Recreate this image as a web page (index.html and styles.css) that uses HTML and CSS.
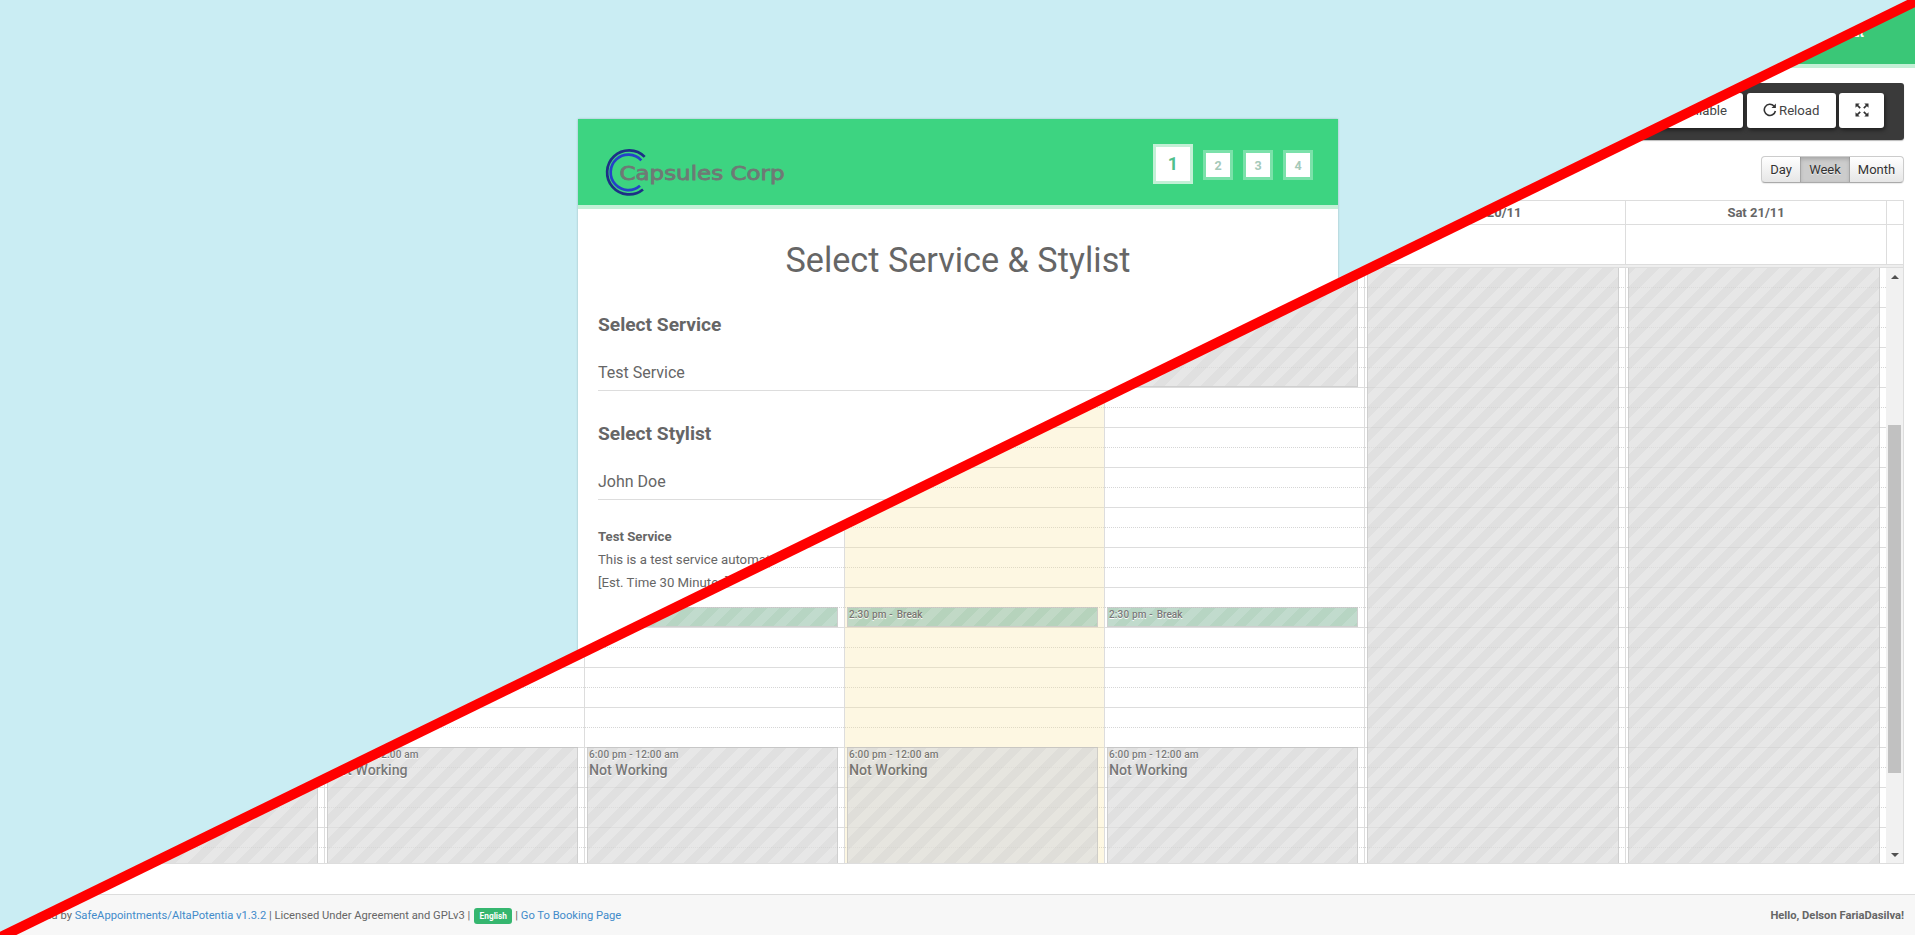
FILE: index.html
```html
<!DOCTYPE html>
<html lang="en">
<head>
<meta charset="utf-8">
<title>Capsules Corp</title>
<link rel="stylesheet" href="styles.css">
</head>
<body>
<div class="stage">
  <div class="backend">
    <header class="topbar"><span class="logout">Log Out</span></header>
    <div class="toolbar">
      <button class="tool">Unavailable</button>
      <button class="tool reload"><svg width="14" height="14" viewBox="0 0 14 14"><path d="M11 3A5.600 5.600 0 1 0 12.400 8" fill="none" stroke="#333" stroke-width="1.600"/><path d="M12.900 0.600V5H8.500z" fill="#333"/></svg>Reload</button>
      <button class="tool full"><svg width="14" height="14" viewBox="0 0 14 14" fill="#333" stroke="#333" stroke-width="1.700"><path stroke="none" d="M.5 .5h4.200L.5 4.700zM13.500 .5v4.200L9.300 .5zM.5 13.500V9.300L4.700 13.500zM13.500 13.500H9.300L13.500 9.300z"/><path d="M2 2l3.200 3.200M12 2l-3.200 3.200M2 12l3.200-3.200M12 12l-3.200-3.200"/></svg></button>
    </div>
    <div class="views"><span>Day</span><span class="on">Week</span><span>Month</span></div>
    <div class="calendar">
      <div class="cols head"><b></b><b>Sun 15/11</b><b>Mon 16/11</b><b>Tue 17/11</b><b>Wed 18/11</b><b>Thu 19/11</b><b>Fri 20/11</b><b>Sat 21/11</b><b></b></div>
      <div class="cols allday"><i></i><i></i><i></i><i></i><i></i><i></i><i></i><i></i><i></i></div>
      <div class="divider"></div>
      <div class="body">
        <div class="cols grid">
          <div class="day axis"></div>
          <div class="day"><div class="event off whole"></div></div>
          <div class="day"><div class="event off am"></div><div class="event break"><small>2:30 pm -</small><em>Break</em></div><div class="event off pm"><small>6:00 pm - 12:00 am</small><strong>Not Working</strong></div></div>
          <div class="day"><div class="event off am"></div><div class="event break"></div><div class="event off pm"><small>6:00 pm - 12:00 am</small><strong>Not Working</strong></div></div>
          <div class="day today"><div class="event off am"></div><div class="event break"><small>2:30 pm -</small><em>Break</em></div><div class="event off pm"><small>6:00 pm - 12:00 am</small><strong>Not Working</strong></div></div>
          <div class="day"><div class="event off am"></div><div class="event break"><small>2:30 pm -</small><em>Break</em></div><div class="event off pm"><small>6:00 pm - 12:00 am</small><strong>Not Working</strong></div></div>
          <div class="day"><div class="event off whole"></div></div>
          <div class="day"><div class="event off whole"></div></div>
        </div>
        <div class="scroll"><span class="arrow up"></span><span class="thumb"></span><span class="arrow down"></span></div>
      </div>
    </div>
    <footer class="footer">
      <div class="credits"><span>Powered by <a>SafeAppointments/AltaPotentia v1.3.2</a> | Licensed Under Agreement and GPLv3 |</span><span class="lang">English</span><span>| <a>Go To Booking Page</a></span></div>
      <strong class="hello">Hello, Delson FariaDasilva!</strong>
    </footer>
  </div>

  <div class="booking">
    <main class="card">
      <header class="card-head">
        <svg class="logo" width="184" height="50" viewBox="0 0 184 50">
          <g fill="none" stroke-width="2.700">
            <path d="M39.700 8.900A22 22 0 1 0 38 41.500" stroke="#1d2f86"/>
            <path d="M36.300 12.300A17.700 17.700 0 1 0 35 37.700" stroke="#2542c8"/>
          </g>
          <text x="14.500" y="31.500" textLength="165" lengthAdjust="spacingAndGlyphs">Capsules Corp</text>
        </svg>
        <div class="steps"><span class="active">1</span><span>2</span><span>3</span><span>4</span></div>
      </header>
      <h1>Select Service &amp; Stylist</h1>
      <section class="form">
        <h2>Select Service</h2>
        <div class="select">Test Service</div>
        <h2>Select Stylist</h2>
        <div class="select">John Doe</div>
        <div class="desc"><strong>Test Service</strong><br>This is a test service automatically<br>[Est. Time 30 Minutes]</div>
      </section>
    </main>
  </div>

  <svg class="slash" width="1915" height="935" viewBox="0 0 1915 935"><path d="M-20 947.200L1935 -8" stroke="#f00" stroke-width="10"/></svg>
</div>
</body>
</html>
```

FILE: styles.css
```css
* { box-sizing: border-box; }
body { margin: 0; font-family: Roboto, "Liberation Sans", sans-serif; color: #666; overflow: hidden; }
.stage { position: relative; width: 1915px; height: 935px; overflow: hidden; background: #fff; }
.backend { height: 935px; display: flex; flex-direction: column; }

.topbar { height: 68px; background: #3ac777; border-bottom: 4px solid #c3f0d6; display: flex; justify-content: flex-end; padding: 23px 51px 0 0; flex: none; }
.logout { color: #fff; font-size: 13px; line-height: 20px; font-weight: 700; }
.toolbar { margin: 15px 11px 0; height: 57px; background: #3a3a3a; border-radius: 3px; padding: 10px 20px 0 0; display: flex; justify-content: flex-end; flex: none; box-shadow: 0 1px 1px #bbb; }
.tool { height: 35px; border: 0; border-radius: 3px; background: #fff; color: #444; font: 13.200px/20px Roboto, sans-serif; padding: 0 16px; display: flex; align-items: center; box-shadow: 1px 2px 4px rgba(0,0,0,.5); }
.reload { width: 89px; margin-left: 4px; gap: 2px; padding: 0 0 0 16px; }
.reload svg { margin-top: -2px; }
.full { width: 45px; margin-left: 3px; padding: 0; justify-content: center; }
.full svg { margin-top: -2px; }
.views { margin: 16px 11px 0 auto; width: 143px; height: 27px; display: grid; grid-template-columns: 38px 50px 53px; border: 1px solid #ccc; border-bottom-color: #aaa; border-radius: 4px; background: linear-gradient(#fff, #e6e6e6); font-size: 13px; line-height: 25px; color: #333; text-align: center; text-shadow: 0 1px 1px rgba(255,255,255,.75); flex: none; box-shadow: 0 1px 1px rgba(0,0,0,.08); }
.views span { white-space: nowrap; }
.views .on { background: #ccc; box-shadow: inset 0 2px 4px rgba(0,0,0,.2), inset 1px 0 #b5b5b5, inset -1px 0 #b5b5b5; }

.calendar { margin: 17px 11px 0 10px; border: 1px solid #ddd; height: 664px; flex: none; }
.cols { display: grid; grid-template-columns: 53px repeat(5, 260px) 261px 261px 17px; }
.head { height: 24px; border-bottom: 1px solid #ddd; font-size: 13px; line-height: 24px; text-align: center; }
.cols b + b, .allday i + i { border-left: 1px solid #ddd; }
.allday { height: 39px; }
.divider { height: 4px; background: #eee; border: 1px solid #ddd; border-width: 1px 0; }
.body { height: 595px; display: flex; overflow: hidden; }
.grid { flex: none; width: 1875px; grid-template-columns: 53px repeat(5, 260px) 261px 261px; height: 595px;
  background:
    repeating-linear-gradient(#0000 0 39px, #ddd 39px 40px),
    repeating-linear-gradient(90deg, #0000 0 1px, #fff 1px 2px),
    repeating-linear-gradient(#0000 0 19px, #d6d6d6 19px 20px, #0000 20px 40px); }
.day { border-left: 1px solid #ddd; padding: 0 6px 0 2px; height: 595px; overflow: hidden; display: flex; flex-direction: column; }
.day.axis { border-left: 0; }
.today { background: rgba(250,228,160,.3); }
.event { flex: none; opacity: .75; border: 1px solid #c0c0c0; overflow: hidden; padding: 0 1px; color: #4c4c4c; text-shadow: 0 1px 0 #fff; background: repeating-linear-gradient(135deg, #d6d6d6 0 4.740px, #dfdfdf 4.740px 13.220px, #d6d6d6 13.220px 16.970px); }
.event small { font-size: 10px; line-height: 14px; letter-spacing: .15px; font-weight: 500; display: block; white-space: nowrap; }
.event strong { font-size: 14.200px; line-height: 16px; display: block; font-weight: 500; }
.whole { height: 596px; border-top: 0; }
.am { height: 119px; border-top: 0; }
.break { height: 20px; margin-top: 220px; display: flex; background: repeating-linear-gradient(135deg, #9fc7b0 0 8.480px, #adcfbd 8.480px 16.970px); font-size: 10px; gap: 4px; }
.break em { font-style: normal; line-height: 13px; font-weight: 500; }
.pm { height: 130px; margin-top: 120px; }
.scroll { width: 17px; background: #f1f1f1; display: flex; flex-direction: column; align-items: center; padding: 7px 0 6px; }
.arrow { border: 4px solid transparent; }
.up { border-top: 0; border-bottom-color: #505050; }
.down { border-bottom: 0; border-top-color: #505050; margin-top: auto; }
.thumb { width: 13px; height: 348px; margin-top: 146px; background: #c1c1c1; }

.footer { margin-top: auto; height: 41px; border-top: 1px solid #ddd; background: #f7f7f7; display: flex; justify-content: space-between; padding: 0 11px 0 14px; font-size: 11.200px; line-height: 41px; }
.footer a { color: #428bca; }
.credits { display: flex; align-items: center; white-space: pre; }
.lang { background: #35b66f; color: #fff; font-size: 8.300px; font-weight: 700; line-height: 16px; height: 16px; width: 38px; text-align: center; border-radius: 3px; margin: 1px 3px 0 4px; }

.booking { position: absolute; inset: 0; background: #caedf3; clip-path: polygon(0 0, 1915px 0, 1915px 2px, 0 937px); }
.card { width: 760px; height: 720px; margin: 119px 0 0 578px; background: #fff; box-shadow: 0 0 2px rgba(0,0,0,.22); }
.card-head { height: 90px; background: #3dd481; border-bottom: 4px solid #c3f0d6; display: flex; justify-content: space-between; padding: 25px 24px 0 27px; }
.logo { margin-top: 4px; overflow: visible; }
.logo text { font: 400 19.500px "DejaVu Sans", sans-serif; fill: #6f7975; stroke: #6f7975; stroke-width: .8px; }
.steps { display: flex; gap: 10px; height: 40px; align-items: center; padding-right: 1px; box-sizing: content-box; }
.steps span { width: 30px; height: 30px; border: 3px solid #7be1aa; background: #fff; color: #a5c9b9; font-size: 12.500px; font-weight: 700; line-height: 25px; text-align: center; margin-top: 1px; }
.steps .active { width: 40px; height: 40px; border-color: #c3f0d6; color: #4fc08d; font-size: 18px; line-height: 34px; margin-top: 0; }
h1 { margin: 29px 0 0; font-size: 34.200px; line-height: 44px; font-weight: 400; text-align: center; }
.form { padding: 31px 20px 0; }
h2 { margin: 0; font-size: 19.200px; line-height: 24px; font-weight: 700; }
.select { height: 33px; margin: 21px 0 31px; border-bottom: 1px solid #ddd; font-size: 16px; line-height: 24px; padding-top: 3px; }
.desc { font-size: 13.200px; line-height: 23px; margin-top: -6px; }
.slash { position: absolute; inset: 0; }
```
